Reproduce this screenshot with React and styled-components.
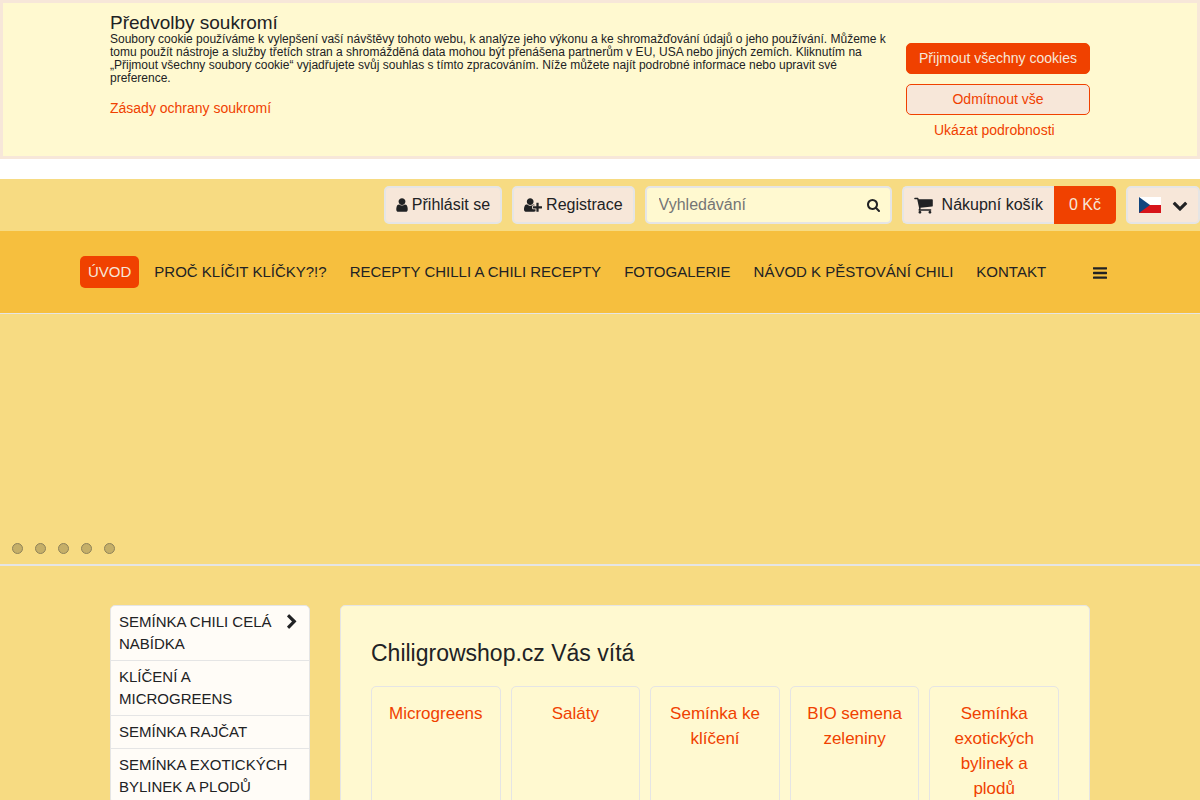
import React from "react";
import styled, { createGlobalStyle } from "styled-components";

const color = {
  text: "#212224",
  orange: "#f04100",
  peach: "#f7e7d9",
  cream: "#fff9d0",
  sand: "#f7db82",
  amber: "#f6bf3e",
  line: "#e5e5e5",
  white: "#fffcf7",
};

const GlobalStyle = createGlobalStyle`
  *, *::before, *::after { box-sizing: border-box; }
  body {
    margin: 0;
    background: #fff;
    color: ${color.text};
    font: 16px/24px "Liberation Sans", Arial, sans-serif;
  }
  a { color: inherit; text-decoration: none; }
  button, input { font: inherit; color: inherit; }
  button { cursor: pointer; }
`;

/* ---------- icons ---------- */

const Svg = styled.svg`
  display: block;
  flex: none;
  fill: currentColor;
`;

const glyphs = {
  user: {
    box: "256 0 1280 1792",
    d: "M1536 1399q0 109-62.5 187t-150.5 78h-854q-88 0-150.5-78t-62.5-187q0-85 8.5-160.5t31.5-152 58.5-131 94-89 134.5-34.5q131 128 313 128t313-128q76 0 134.5 34.5t94 89 58.5 131 31.5 152 8.5 160.5zm-256-887q0 159-112.5 271.5t-271.5 112.5-271.5-112.5-112.5-271.5 112.5-271.5 271.5-112.5 271.5 112.5 112.5 271.5z",
  },
  userPlus: {
    box: "0 0 2048 1792",
    d: "M704 896q-159 0-271.5-112.5t-112.5-271.5 112.5-271.5 271.5-112.5 271.5 112.5 112.5 271.5-112.5 271.5-271.5 112.5zm960 128h352q13 0 22.5 9.5t9.5 22.5v192q0 13-9.5 22.5t-22.5 9.5h-352v352q0 13-9.5 22.5t-22.5 9.5h-192q-13 0-22.5-9.5t-9.5-22.5v-352h-352q-13 0-22.5-9.5t-9.5-22.5v-192q0-13 9.5-22.5t22.5-9.5h352v-352q0-13 9.5-22.5t22.5-9.5h192q13 0 22.5 9.5t9.5 22.5v352zm-736 224q0 52 38 90t90 38h256v238q-68 50-171 50h-874q-121 0-194-69t-73-190q0-53 3.5-103.5t14-109 26.5-108.5 43-97.5 62-81 85.5-53.5 111.5-20q19 0 39 17 79 61 154.5 91.5t164.5 30.5 164.5-30.5 154.5-91.5q20-17 39-17 132 0 217 96h-223q-52 0-90 38t-38 90v192z",
  },
  search: {
    box: "64 128 1664 1664",
    d: "M1216 832q0-185-131.5-316.5t-316.5-131.5-316.5 131.5-131.5 316.5 131.5 316.5 316.5 131.5 316.5-131.5 131.5-316.5zm512 832q0 52-38 90t-90 38q-54 0-90-38l-343-342q-179 124-399 124-143 0-273.5-55.5t-225-150-150-225-55.5-273.5 55.5-273.5 150-225 225-150 273.5-55.5 273.5 55.5 225 150 150 225 55.5 273.5q0 220-124 399l343 343q37 37 37 90z",
  },
  cart: {
    box: "64 0 1664 1792",
    d: "M704 1536q0 52-38 90t-90 38-90-38-38-90 38-90 90-38 90 38 38 90zm896 0q0 52-38 90t-90 38-90-38-38-90 38-90 90-38 90 38 38 90zm128-1088v512q0 24-16.5 42.5t-40.5 21.5l-1044 122q13 60 13 70 0 16-24 64h920q26 0 45 19t19 45-19 45-45 19h-1024q-26 0-45-19t-19-45q0-11 8-31.5t16-36 21.5-40 15.5-29.5l-177-823h-204q-26 0-45-19t-19-45 19-45 45-19h256q16 0 28.5 6.5t19.5 15.5 13 24.5 8 26 5.5 29.5 4.5 26h1201q26 0 45 19t19 45z",
  },
  chevronDown: {
    box: "0 0 1792 1792",
    d: "M1683 808l-742 741q-19 19-45 19t-45-19l-742-741q-19-19-19-45.5t19-45.5l166-165q19-19 45-19t45 19l531 531 531-531q19-19 45-19t45 19l166 165q19 19 19 45.5t-19 45.5z",
  },
  chevronRight: {
    box: "0 0 1792 1792",
    d: "M1363 877l-742 742q-19 19-45 19t-45-19l-166-166q-19-19-19-45t19-45l531-531-531-531q-19-19-19-45t19-45l166-166q19-19 45-19t45 19l742 742q19 19 19 45t-19 45z",
  },
  bars: {
    box: "128 128 1536 1536",
    d: "M1664 1344v128q0 26-19 45t-45 19h-1408q-26 0-45-19t-19-45v-128q0-26 19-45t45-19h1408q26 0 45 19t19 45zm0-512v128q0 26-19 45t-45 19h-1408q-26 0-45-19t-19-45v-128q0-26 19-45t45-19h1408q26 0 45 19t19 45zm0-512v128q0 26-19 45t-45 19h-1408q-26 0-45-19t-19-45v-128q0-26 19-45t45-19h1408q26 0 45 19t19 45z",
  },
};

const Icon = ({ name, width, height }) => (
  <Svg viewBox={glyphs[name].box} width={width} height={height} aria-hidden="true">
    <path d={glyphs[name].d} />
  </Svg>
);

const CzechFlag = () => (
  <Svg viewBox="0 0 22 16" width="22" height="16" role="img" aria-label="Čeština">
    <path fill="#fff" d="M0 0h22v8H0z" />
    <path fill="#d7141a" d="M0 8h22v8H0z" />
    <path fill="#11457e" d="M0 0l11 8L0 16z" />
  </Svg>
);

/* ---------- cookie notice ---------- */

const Notice = styled.section`
  min-height: 159px;
  margin-bottom: 20px;
  padding: 9px 16px;
  background: ${color.cream};
  border: 3px solid ${color.peach};
`;

const NoticeInner = styled.div`
  display: flex;
  gap: 16px;
  max-width: 980px;
  margin: 0 auto;
`;

const NoticeText = styled.div`
  flex: 1;
  font-size: 12px;
  line-height: 13px;
`;

const NoticeTitle = styled.h2`
  margin: 0;
  font-size: 19px;
  font-weight: 400;
  line-height: 21px;
`;

const NoticeCopy = styled.p`
  margin: 0 0 13px;
`;

const TextLink = styled.a`
  color: ${color.orange};
  font-size: 14px;
  line-height: 20px;
`;

const NoticeActions = styled.div`
  display: flex;
  flex-direction: column;
  width: 184px;
  padding-top: 31px;
`;

const NoticeButton = styled.button`
  height: 31px;
  margin-bottom: 10px;
  padding: 0 0 2px;
  border: 1px solid ${color.orange};
  border-radius: 5px;
  background: ${(p) => (p.$primary ? color.orange : color.peach)};
  color: ${(p) => (p.$primary ? color.peach : color.orange)};
  font-size: 14px;
  line-height: 20px;
`;

const DetailsButton = styled.button`
  align-self: flex-start;
  margin-top: -5px;
  padding: 0 28px;
  border: 0;
  background: none;
  color: ${color.orange};
  font-size: 14px;
  line-height: 20px;
`;

/* ---------- header ---------- */

const Page = styled.div`
  background: ${color.sand};
`;

const TopBar = styled.div`
  display: flex;
  justify-content: flex-end;
  gap: 10px;
  padding: 7px 0;
`;

const AccountLink = styled.a`
  display: flex;
  align-items: center;
  gap: 4px;
  height: 38px;
  padding: 0 10px;
  background: ${color.peach};
  border: 2px solid ${color.line};
  border-radius: 5px;
`;

const SearchForm = styled.form`
  display: flex;
  align-items: center;
  width: 247px;
  height: 38px;
  padding: 0 10px 0 12px;
  background: ${color.cream};
  border: 2px solid ${color.line};
  border-radius: 5px;
`;

const SearchInput = styled.input`
  flex: 1;
  min-width: 0;
  padding: 0;
  border: 0;
  outline: 0;
  background: none;
  &::placeholder { color: #757575; opacity: 1; }
`;

const IconButton = styled.button`
  display: flex;
  padding: 1px 0 0;
  border: 0;
  background: none;
`;

const CartLink = styled.a`
  display: flex;
  height: 38px;
`;

const CartLabel = styled.span`
  display: flex;
  align-items: center;
  gap: 9px;
  padding: 0 11px 0 10px;
  background: ${color.peach};
  border: 2px solid ${color.line};
  border-right: 0;
  border-radius: 5px 0 0 5px;
`;

const CartTotal = styled.span`
  padding: 7px 15px;
  background: ${color.orange};
  border-radius: 0 5px 5px 0;
  color: ${color.peach};
`;

const LanguageButton = styled.button`
  display: flex;
  align-items: center;
  gap: 11px;
  height: 38px;
  padding: 0 10px 0 11px;
  background: ${color.peach};
  border: 2px solid ${color.line};
  border-radius: 5px;
`;

const MainNav = styled.nav`
  display: flex;
  align-items: center;
  gap: 7px;
  min-height: 83px;
  padding: 0 80px;
  background: ${color.amber};
  border-bottom: 1px solid ${color.line};
`;

const NavLink = styled.a`
  padding: 4px 8px;
  border-radius: 5px;
  background: ${(p) => (p.$active ? color.orange : "none")};
  color: ${(p) => (p.$active ? color.peach : color.text)};
  font-size: 15px;
  text-transform: uppercase;
  white-space: nowrap;
`;

const MenuButton = styled(IconButton)`
  margin-left: 32px;
`;

/* ---------- slider ---------- */

const Slider = styled.section`
  display: flex;
  align-items: flex-end;
  gap: 12px;
  height: 252px;
  padding: 0 12px 10px;
  border-bottom: 2px solid ${color.line};
`;

const Dot = styled.button`
  width: 11px;
  height: 11px;
  padding: 0;
  border: 1px solid #8f835a;
  border-radius: 50%;
  background: #c5af68;
`;

/* ---------- content ---------- */

const Content = styled.div`
  display: flex;
  align-items: flex-start;
  gap: 30px;
  max-width: 980px;
  margin: 0 auto;
  padding: 39px 0 30px;
`;

const Sidebar = styled.nav`
  flex: none;
  width: 200px;
  background: ${color.white};
  border: 1px solid ${color.line};
  border-radius: 5px;
`;

const SidebarLink = styled.a`
  display: flex;
  justify-content: space-between;
  padding: 5px 9px 5px 8px;
  border-bottom: 1px solid ${color.line};
  font-size: 15px;
  line-height: 22px;
  text-transform: uppercase;
  &:last-child { border-bottom: 0; }
  svg { margin-top: 3px; }
`;

const Main = styled.main`
  flex: 1;
  min-width: 0;
  padding: 30px;
  background: ${color.cream};
  border: 1px solid ${color.line};
  border-radius: 5px;
`;

const Title = styled.h1`
  margin: 0 0 16px;
  font-size: 23px;
  font-weight: 400;
  line-height: 34px;
`;

const Categories = styled.div`
  display: grid;
  grid-template-columns: repeat(5, 1fr);
  gap: 10px;
`;

const Category = styled.a`
  min-height: 150px;
  padding: 14px 15px;
  border: 1px solid ${color.line};
  border-radius: 5px;
  color: ${color.orange};
  font-size: 17px;
  line-height: 25px;
  text-align: center;
`;

const navItems = [
  "Úvod",
  "Proč klíčit klíčky?!?",
  "Recepty chilli a chili recepty",
  "Fotogalerie",
  "Návod k pěstování chili",
  "Kontakt",
];

const sidebarItems = [
  { label: "Semínka chili celá nabídka", nested: true },
  { label: "Klíčení a microgreens" },
  { label: "Semínka rajčat" },
  { label: "Semínka exotických bylinek a plodů" },
];

const categories = [
  "Microgreens",
  "Saláty",
  "Semínka ke klíčení",
  "BIO semena zeleniny",
  "Semínka exotických bylinek a plodů",
];

export default function App() {
  return (
    <>
      <GlobalStyle />
      <Notice>
        <NoticeInner>
          <NoticeText>
            <NoticeTitle>Předvolby soukromí</NoticeTitle>
            <NoticeCopy>
              Soubory cookie používáme k vylepšení vaší návštěvy tohoto webu, k analýze jeho
              výkonu a ke shromažďování údajů o jeho používání. Můžeme k tomu použít nástroje a
              služby třetích stran a shromážděná data mohou být přenášena partnerům v EU, USA
              nebo jiných zemích. Kliknutím na „Přijmout všechny soubory cookie“ vyjadřujete
              svůj souhlas s tímto zpracováním. Níže můžete najít podrobné informace nebo
              upravit své preference.
            </NoticeCopy>
            <TextLink href="#soukromi">Zásady ochrany soukromí</TextLink>
          </NoticeText>
          <NoticeActions>
            <NoticeButton type="button" $primary>Přijmout všechny cookies</NoticeButton>
            <NoticeButton type="button">Odmítnout vše</NoticeButton>
            <DetailsButton type="button">Ukázat podrobnosti</DetailsButton>
          </NoticeActions>
        </NoticeInner>
      </Notice>

      <Page>
        <header>
          <TopBar>
            <AccountLink href="#prihlasit">
              <Icon name="user" width={12} height={16} />
              Přihlásit se
            </AccountLink>
            <AccountLink href="#registrace">
              <Icon name="userPlus" width={18} height={16} />
              Registrace
            </AccountLink>
            <SearchForm role="search">
              <SearchInput type="text" placeholder="Vyhledávání" aria-label="Vyhledávání" />
              <IconButton type="submit" aria-label="Hledat">
                <Icon name="search" width={13} height={13} />
              </IconButton>
            </SearchForm>
            <CartLink href="#kosik">
              <CartLabel>
                <Icon name="cart" width={19} height={20} />
                Nákupní košík
              </CartLabel>
              <CartTotal>0 Kč</CartTotal>
            </CartLink>
            <LanguageButton type="button" aria-label="Jazyk">
              <CzechFlag />
              <Icon name="chevronDown" width={16} height={16} />
            </LanguageButton>
          </TopBar>
          <MainNav>
            {navItems.map((label, i) => (
              <NavLink key={label} href="#" $active={i === 0}>{label}</NavLink>
            ))}
            <MenuButton type="button" aria-label="Menu">
              <Icon name="bars" width={14} height={14} />
            </MenuButton>
          </MainNav>
        </header>

        <Slider aria-label="Bannery">
          {[1, 2, 3, 4, 5].map((n) => (
            <Dot key={n} type="button" aria-label={`Banner ${n}`} />
          ))}
        </Slider>

        <Content>
          <Sidebar>
            {sidebarItems.map(({ label, nested }) => (
              <SidebarLink key={label} href="#">
                <span>{label}</span>
                {nested && <Icon name="chevronRight" width={16} height={16} />}
              </SidebarLink>
            ))}
          </Sidebar>
          <Main>
            <Title>Chiligrowshop.cz Vás vítá</Title>
            <Categories>
              {categories.map((label) => (
                <Category key={label} href="#">{label}</Category>
              ))}
            </Categories>
          </Main>
        </Content>
      </Page>
    </>
  );
}
